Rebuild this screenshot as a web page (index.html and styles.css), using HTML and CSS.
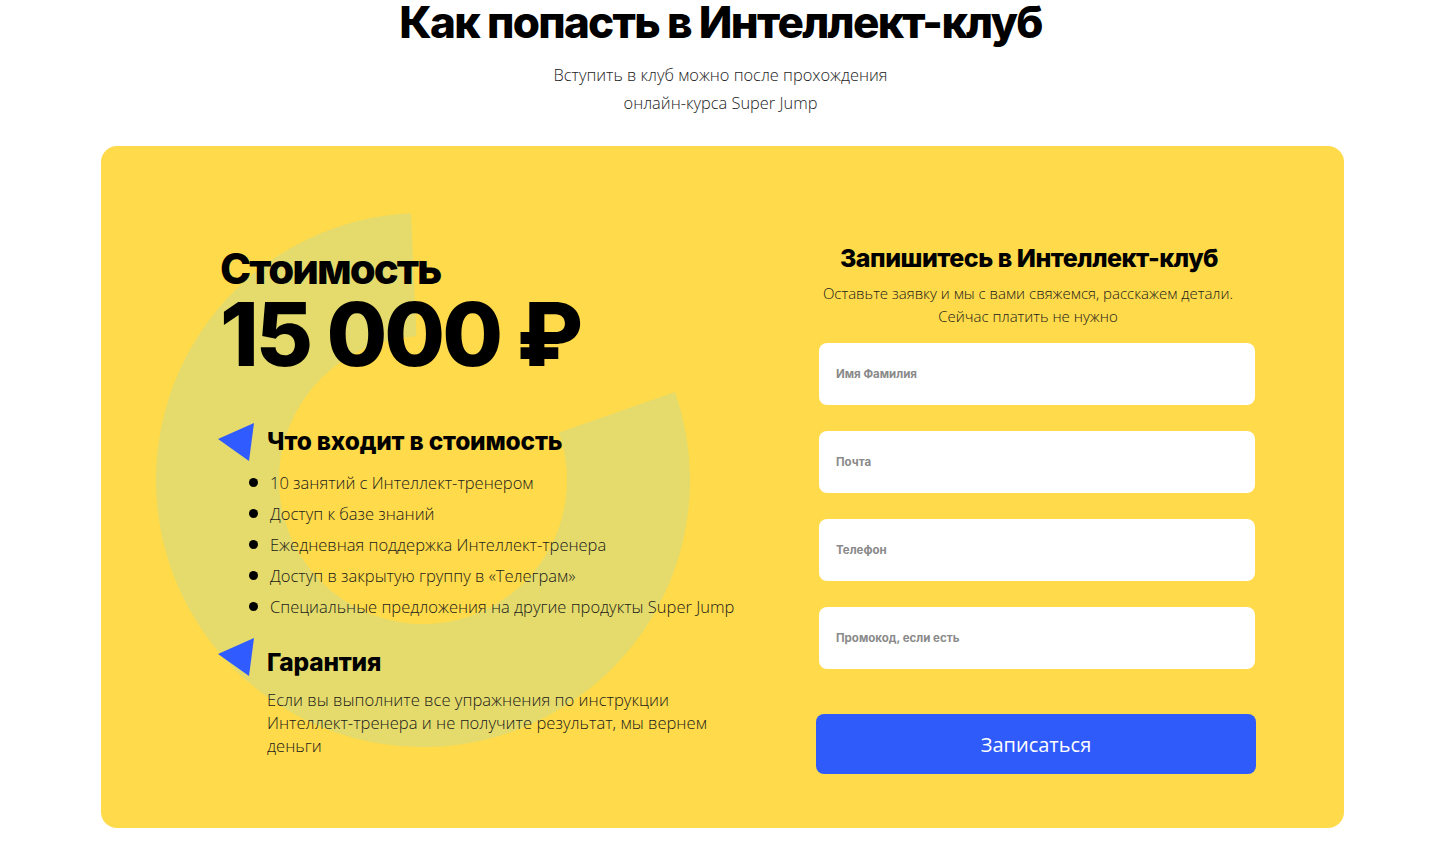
FILE: index.html
```html
<!DOCTYPE html>
<html lang="ru">
<head>
<meta charset="utf-8">
<title>Как попасть в Интеллект-клуб</title>
<link rel="stylesheet" href="styles.css">
</head>
<body>
<h1 class="title">Как попасть в Интеллект-клуб</h1>
<p class="lead">Вступить в клуб можно после прохождения<br>онлайн-курса Super Jump</p>

<section class="card">
  <svg class="ring" width="534" height="534" viewBox="0 0 534 534" aria-hidden="true">
    <path d="M 257.75 61.7 A 205.5 205.5 0 1 0 461 199.2" fill="none" stroke="#E4DB6C" stroke-width="123"/>
  </svg>

  <div class="info">
    <div class="cost-label">Стоимость</div>
    <div class="price">15 000 ₽</div>

    <div class="sub-head">
      <svg class="tri" width="40" height="40" viewBox="0 0 40 40" aria-hidden="true"><polygon points="2,18 38,2 33,40" fill="#2F5BFF"/></svg>
      <h3>Что входит в стоимость</h3>
    </div>
    <ul class="features">
      <li>10 занятий с Интеллект-тренером</li>
      <li>Доступ к базе знаний</li>
      <li>Ежедневная поддержка Интеллект-тренера</li>
      <li>Доступ в закрытую группу в «Телеграм»</li>
      <li>Специальные предложения на другие продукты Super Jump</li>
    </ul>

    <div class="sub-head sub-head--guarantee">
      <svg class="tri" width="40" height="40" viewBox="0 0 40 40" aria-hidden="true"><polygon points="2,18 38,2 33,40" fill="#2F5BFF"/></svg>
      <h3>Гарантия</h3>
    </div>
    <p class="guarantee">Если вы выполните все упражнения по инструкции Интеллект-тренера и не получите результат, мы вернем деньги</p>
  </div>

  <form class="form" onsubmit="return false">
    <h2 class="form-title">Запишитесь в Интеллект-клуб</h2>
    <p class="form-note">Оставьте заявку и мы с вами свяжемся, расскажем детали.<br>Сейчас платить не нужно</p>
    <input class="field" type="text" placeholder="Имя Фамилия">
    <input class="field" type="email" placeholder="Почта">
    <input class="field" type="tel" placeholder="Телефон">
    <input class="field" type="text" placeholder="Промокод, если есть">
    <button class="submit" type="submit">Записаться</button>
  </form>
</section>
</body>
</html>
```

FILE: styles.css
```css
* { box-sizing: border-box; }

html, body {
  margin: 0;
  padding: 0;
  background: #ffffff;
}

body {
  font-family: "Open Sans", "Noto Sans", "DejaVu Sans", sans-serif;
  color: #1a1a1a;
  width: 1441px;
}

.title {
  margin: 0;
  font-family: Inter, "Noto Sans", sans-serif;
  font-weight: 800;
  font-size: 44px;
  line-height: 44px;
  text-align: center;
  color: #000;
  letter-spacing: -1.7px;
}

.lead {
  margin: 17px 0 0;
  font-size: 16.4px;
  line-height: 28px;
  font-weight: 300;
  text-align: center;
  color: #222;
}

.card {
  position: relative;
  margin: 29px 0 0 101px;
  width: 1243px;
  height: 682px;
  background: #FFDA4A;
  border-radius: 16px;
  display: flex;
  padding: 96px 88px 0 115px;
}

.ring {
  position: absolute;
  left: 55px;
  top: 67px;
  pointer-events: none;
}

.info {
  position: relative;
  flex: 1;
  padding-top: 6px;
}

.cost-label {
  font-family: Inter, "Noto Sans", sans-serif;
  font-weight: 800;
  font-size: 42px;
  line-height: 42px;
  color: #000;
  margin-left: 4px;
  letter-spacing: -2px;
}

.price {
  margin-top: 4px;
  margin-left: 4px;
  font-family: Inter, "Noto Sans", sans-serif;
  font-weight: 800;
  font-size: 88px;
  line-height: 80px;
  color: #000;
  letter-spacing: -3px;
}

.sub-head {
  display: flex;
  align-items: center;
  margin-top: 47px;
  height: 40px;
}

.sub-head--guarantee {
  margin-top: 14px;
}

.sub-head--guarantee h3 {
  padding-top: 12px;
}

.tri {
  flex: none;
  margin-right: 11px;
}

.sub-head h3 {
  margin: 0;
  font-family: Inter, "Noto Sans", sans-serif;
  font-weight: 800;
  font-size: 24.5px;
  line-height: 30px;
  color: #000;
  letter-spacing: -0.2px;
}

.features {
  list-style: none;
  margin: 6px 0 0 33px;
  padding: 0;
}

.features li {
  display: flex;
  align-items: center;
  font-size: 16.5px;
  line-height: 31px;
  font-weight: 300;
  color: #1a1a1a;
}

.features li::before {
  content: "";
  flex: none;
  width: 9px;
  height: 9px;
  border-radius: 50%;
  background: #000;
  margin-right: 12px;
}

.guarantee {
  margin: 12px 0 0 51px;
  width: 470px;
  font-size: 16.6px;
  line-height: 23px;
  font-weight: 300;
  color: #1a1a1a;
}

.form {
  position: relative;
  width: 440px;
  flex: none;
  display: flex;
  flex-direction: column;
  align-items: center;
}

.form-title {
  margin: 0 14px 0 0;
  font-family: Inter, "Noto Sans", sans-serif;
  font-weight: 800;
  font-size: 25px;
  line-height: 32px;
  color: #000;
  letter-spacing: -0.5px;
}

.form-note {
  margin: 8px 16px 0 0;
  font-size: 15px;
  line-height: 23px;
  font-weight: 300;
  text-align: center;
  color: #1a1a1a;
}

.field {
  display: block;
  align-self: flex-start;
  width: 436px;
  height: 62px;
  margin: 26px 0 0 3px;
  border: none;
  border-radius: 8px;
  background: #fff;
  padding: 0 17px;
  font-family: Inter, "Noto Sans", sans-serif;
  font-weight: 700;
  font-size: 11.5px;
  color: #333;
  outline: none;
}

.form-note + .field {
  margin-top: 15px;
}

.field::placeholder {
  color: #8a8a8a;
  opacity: 1;
}

.submit {
  display: block;
  width: 440px;
  height: 60px;
  margin-top: 45px;
  border: none;
  border-radius: 8px;
  background: #2F5BFB;
  color: #fff;
  font-family: "Open Sans", "Noto Sans", sans-serif;
  font-size: 20px;
  font-weight: 400;
  cursor: pointer;
}
```
